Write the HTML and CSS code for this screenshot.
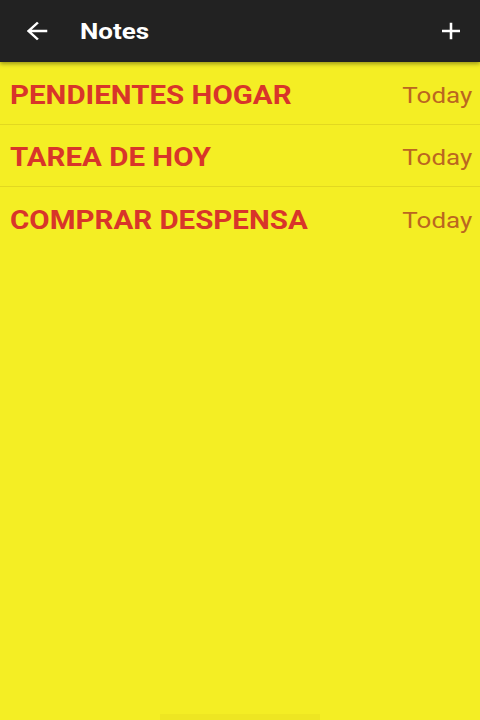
FILE: index.html
```html
<!DOCTYPE html>
<html lang="es">
<head>
  <meta charset="UTF-8" />
  <meta name="viewport" content="width=device-width, initial-scale=1.0"/>
  <title>Notes</title>
  <link rel="stylesheet" href="styles.css">
</head>
<body>
  <div class="toolbar">
    <div class="icon-button">
      <svg viewBox="0 0 24 24"><path d="M20 11H7.83l5.59-5.59L12 4l-8 8 8 8 1.41-1.41L7.83 13H20v-2z"/></svg>
    </div>
    <div class="title">Notes</div>
    <div class="icon-button add">
      <svg viewBox="0 0 24 24"><path d="M19 13h-6v6h-2v-6H5v-2h6V5h2v6h6v2z"/></svg>
    </div>
  </div>

  <div class="notes">
    <div class="note">
      <span class="note-title">PENDIENTES HOGAR</span>
      <span class="note-date">Today</span>
    </div>
    <div class="note">
      <span class="note-title">TAREA DE HOY</span>
      <span class="note-date">Today</span>
    </div>
    <div class="note">
      <span class="note-title">COMPRAR DESPENSA</span>
      <span class="note-date">Today</span>
    </div>
  </div>

  <div class="home-bar"></div>
</body>
</html>
```

FILE: styles.css
```css
body {
  margin: 0;
  height: 100vh;
  background-color: #f4ee24;
  font-family: Roboto, 'Liberation Sans', sans-serif;
  display: flex;
  flex-direction: column;
}

/* the screenshot is stretched sideways a bit, so text gets scaleX to follow */

.toolbar {
  height: 62px;
  background-color: #222222;
  display: flex;
  align-items: center;
  padding: 0 12px 0 22px;
  box-shadow: 0 2px 4px rgba(0, 0, 0, 0.35);
  position: relative;
  z-index: 1;
}

.icon-button {
  width: 30px;
  height: 30px;
  display: flex;
  justify-content: center;
  align-items: center;
}

.icon-button svg { width: 28px; height: 28px; fill: #fff; transform: scaleX(1.1); }

.title {
  color: #fff;
  font-size: 22px;
  font-weight: bold;
  margin-left: 28px;
  flex: 1;
  transform: scaleX(1.18);
  transform-origin: left center;
}

.add { margin-right: 2px; }

.notes {
  display: flex;
  flex-direction: column;
}

.note {
  height: 62.5px;
  display: flex;
  align-items: center;
  justify-content: space-between;
  padding: 5px 8px 0 10px;
  box-sizing: border-box;
  border-bottom: 1px solid #e2d820;
}

.note:last-child { border-bottom: none; }

.note-title {
  color: #d8352a;
  font-size: 25px;
  font-weight: bold;
  transform: scaleX(1.18);
  transform-origin: left center;
}

.note-date {
  color: #bb6620;
  font-size: 22px;
  transform: scaleX(1.18);
  transform-origin: right center;
}

.home-bar {
  margin-top: auto;
  align-self: center;
  width: 160px;
  height: 6px;
  background-color: #eee622;
}
```
